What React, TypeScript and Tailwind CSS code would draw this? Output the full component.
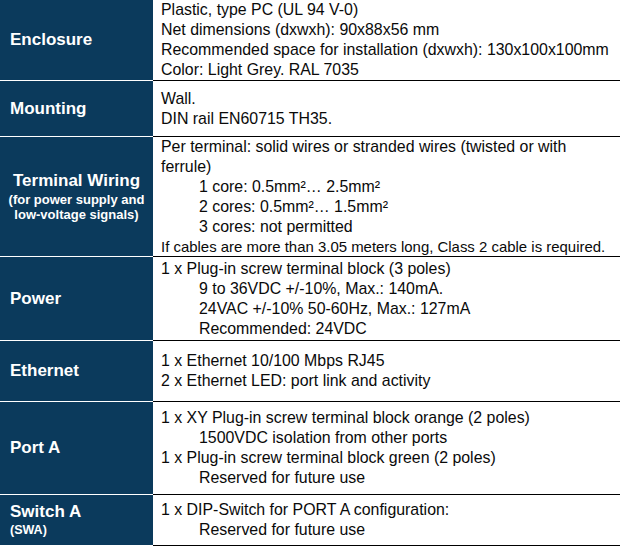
import React from "react";

type Line = { text: string; indent?: boolean; small?: boolean };

type Row = {
  label: string;
  sub?: string[];
  subLeft?: string;
  height: string;
  lines: Line[];
};

const rows: Row[] = [
  {
    label: "Enclosure",
    height: "h-[81px]",
    lines: [
      { text: "Plastic, type PC (UL 94 V-0)" },
      { text: "Net dimensions (dxwxh): 90x88x56 mm" },
      { text: "Recommended space for installation (dxwxh): 130x100x100mm" },
      { text: "Color: Light Grey. RAL 7035" },
    ],
  },
  {
    label: "Mounting",
    height: "h-[56px]",
    lines: [{ text: "Wall." }, { text: "DIN rail EN60715 TH35." }],
  },
  {
    label: "Terminal Wiring",
    sub: ["(for power supply and", "low-voltage signals)"],
    height: "h-[120px]",
    lines: [
      { text: "Per terminal: solid wires or stranded wires (twisted or with" },
      { text: "ferrule)" },
      { text: "1 core: 0.5mm²… 2.5mm²", indent: true },
      { text: "2 cores: 0.5mm²… 1.5mm²", indent: true },
      { text: "3 cores: not permitted", indent: true },
      {
        text: "If cables are more than 3.05 meters long, Class 2 cable is required.",
        small: true,
      },
    ],
  },
  {
    label: "Power",
    height: "h-[84px]",
    lines: [
      { text: "1 x Plug-in screw terminal block (3 poles)" },
      { text: "9 to 36VDC +/-10%, Max.: 140mA.", indent: true },
      { text: "24VAC +/-10% 50-60Hz, Max.: 127mA", indent: true },
      { text: "Recommended: 24VDC", indent: true },
    ],
  },
  {
    label: "Ethernet",
    height: "h-[61px]",
    lines: [
      { text: "1 x Ethernet 10/100 Mbps RJ45" },
      { text: "2 x Ethernet LED: port link and activity" },
    ],
  },
  {
    label: "Port A",
    height: "h-[93px]",
    lines: [
      { text: "1 x XY Plug-in screw terminal block orange (2 poles)" },
      { text: "1500VDC isolation from other ports", indent: true },
      { text: "1 x Plug-in screw terminal block green (2 poles)" },
      { text: "Reserved for future use", indent: true },
    ],
  },
  {
    label: "Switch A",
    subLeft: "(SWA)",
    height: "h-[51px]",
    lines: [
      { text: "1 x DIP-Switch for PORT A configuration:" },
      { text: "Reserved for future use", indent: true },
    ],
  },
];

function Label({ row }: { row: Row }) {
  if (row.sub) {
    return (
      <div className="flex w-full flex-col items-center text-center">
        <div className="text-[17px] font-bold leading-[20px]">{row.label}</div>
        <div className="mt-[1px] text-[13px] font-bold leading-[15px]">
          {row.sub.map((s) => (
            <div key={s}>{s}</div>
          ))}
        </div>
      </div>
    );
  }
  return (
    <div className="pl-[10px]">
      <div className="text-[17px] font-bold leading-[20px]">{row.label}</div>
      {row.subLeft && (
        <div className="text-[12.5px] font-bold leading-[16px]">{row.subLeft}</div>
      )}
    </div>
  );
}

export default function App() {
  return (
    <div
      className="w-[620px] bg-white text-black"
      style={{ fontFamily: '"Liberation Sans", Arial, sans-serif' }}
    >
      {rows.map((row) => (
        <div key={row.label} className={`flex ${row.height}`}>
          <div className="flex w-[153px] shrink-0 items-center border-b border-white bg-[#0b3a5c] text-white">
            <Label row={row} />
          </div>
          <div className="flex flex-1 flex-col justify-center border-b border-black pl-2 text-[15.9px] leading-[20px] text-[#0a0a0a]">
            {row.lines.map((l) => (
              <div
                key={l.text}
                className={`whitespace-nowrap ${l.indent ? "pl-[38px]" : ""} ${
                  l.small ? "text-[14.95px]" : ""
                }`}
              >
                {l.text}
              </div>
            ))}
          </div>
        </div>
      ))}
    </div>
  );
}
